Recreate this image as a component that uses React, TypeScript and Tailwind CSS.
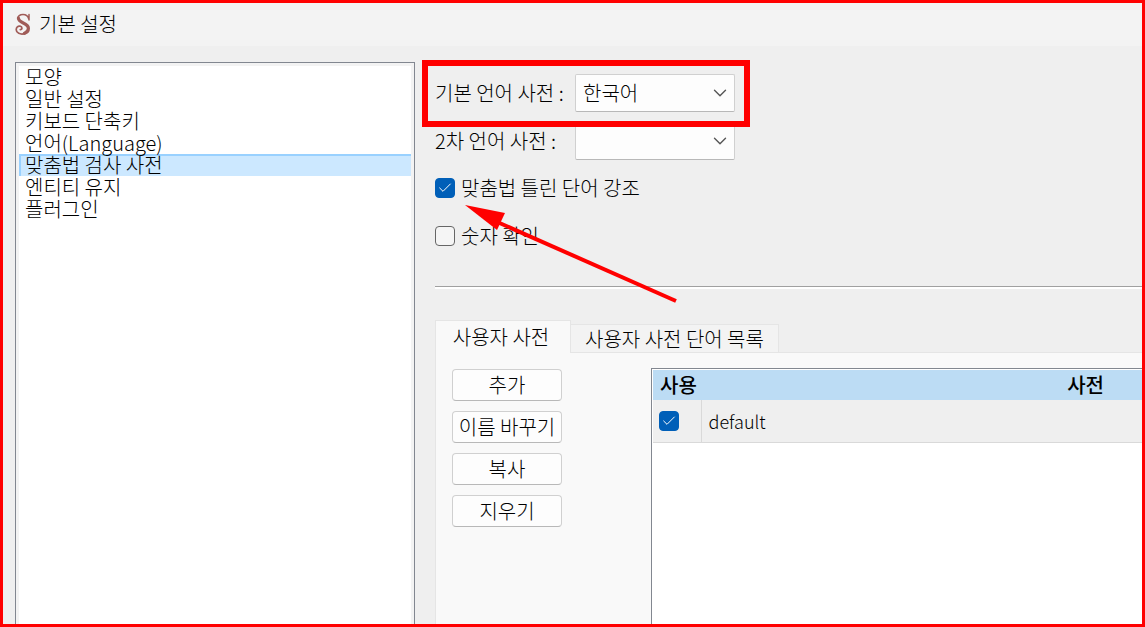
// src/App.tsx
import { Check, ChevronDown } from 'lucide-react';

const menuItems = [
  '모양',
  '일반 설정',
  '키보드 단축키',
  '언어(Language)',
  '맞춤법 검사 사전',
  '엔티티 유지',
  '플러그인',
];

const actions = ['추가', '이름 바꾸기', '복사', '지우기'];

function Logo() {
  return (
    <svg viewBox="0 0 16 22" className="w-4 h-[22px]" fill="none" stroke="#a05c58" strokeLinecap="round">
      <path d="M14 1.5 V7 M13.800 6 C13 3 10.800 1.500 8 1.500 C4.800 1.500 2.800 3.200 2.800 5.600" strokeWidth="1.500" />
      <path d="M3.400 5 C3.200 10.500 13.400 9.500 13.400 15.300 C13.400 18 11.800 19.600 9.500 20.300" strokeWidth="3.200" />
      <path d="M10 20.600 C5 22 1.200 19.800 1.200 16.800 C1.200 14.200 3 12.900 5 13.200 C7.600 13.600 7.400 16.800 5.300 16.600" strokeWidth="1.700" />
    </svg>
  );
}

function Dropdown({ id, label, options }: { id: string; label: string; options: string[] }) {
  return (
    <div className="flex h-[38px] items-center">
      <label htmlFor={id} className="w-[140px] shrink-0">
        {label}
      </label>
      <div className="relative">
        <select
          id={id}
          className="h-[38px] w-40 appearance-none rounded-xs border border-[#d0d0d0] border-b-[#b8b8b8] bg-[#fdfdfd] pl-[7px]"
        >
          {options.map((option) => (
            <option key={option}>{option}</option>
          ))}
        </select>
        <ChevronDown className="pointer-events-none absolute right-1 top-2 size-[22px] text-[#555]" strokeWidth={1.5} />
      </div>
    </div>
  );
}

function Tick({ id, label, checked = false, hideLabel = false }: { id: string; label: string; checked?: boolean; hideLabel?: boolean }) {
  return (
    <div className="flex items-center gap-1.5">
      <span className="relative size-5">
        <input
          id={id}
          type="checkbox"
          defaultChecked={checked}
          aria-label={hideLabel ? label : undefined}
          className="peer block size-5 appearance-none rounded-sm border border-[#666] bg-[#f5f5f5] checked:border-[#005fb8] checked:bg-[#005fb8]"
        />
        <Check
          className="pointer-events-none absolute left-0.5 top-0.5 hidden size-4 text-white peer-checked:block"
          strokeWidth={1.5}
        />
      </span>
      {!hideLabel && <label htmlFor={id}>{label}</label>}
    </div>
  );
}

function DictionaryTable() {
  return (
    <div className="flex-1 border-l border-t border-[#828790] bg-white pl-px pt-px">
      <table className="w-full border-collapse">
        <thead>
          <tr className="h-[30px] bg-[#bcdcf4]">
            <th className="w-12 whitespace-nowrap pl-[7px] text-left font-medium">사용</th>
            <th className="pr-[38px] text-right font-medium">사전</th>
          </tr>
        </thead>
        <tbody>
          <tr className="h-[42px] border-b border-[#d9d9d9] bg-[#efefef]">
            <td className="border-r border-[#d9d9d9] pl-1.5">
              <Tick id="use-default" label="default" checked hideLabel />
            </td>
            <td className="pl-[7px] text-lg">default</td>
          </tr>
        </tbody>
      </table>
    </div>
  );
}

export default function App() {
  return (
    <div className="relative flex min-h-screen flex-col overflow-hidden border-[3px] border-[#ff0000] bg-[#efefef] font-['Noto_Sans_CJK_KR',sans-serif] text-xl leading-[22px] font-light text-black">
      <header className="flex h-[43px] items-center gap-2 bg-[#f3f3f3] pb-0.5 pl-3">
        <Logo />
        <h1>기본 설정</h1>
      </header>

      <main className="flex flex-1 gap-5 pl-3 pt-4">
        <nav className="w-[400px] shrink-0 border border-b-0 border-[#828790] bg-[#f3f3f3] px-[3px] pt-[3px]">
          <ul className="h-full bg-white">
            {menuItems.map((item) => (
              <li key={item}>
                <a
                  href="#"
                  className={
                    item === '맞춤법 검사 사전'
                      ? 'block h-[22px] border-l-2 border-t-2 border-[#99d1ff] bg-[#cce8ff] pl-1 leading-[18px]'
                      : 'block pl-1.5'
                  }
                >
                  {item}
                </a>
              </li>
            ))}
          </ul>
        </nav>

        <section className="flex min-w-0 flex-1 flex-col pt-3">
          <div className="relative flex flex-col gap-2.5">
            <Dropdown id="primary" label="기본 언어 사전 :" options={['한국어']} />
            <Dropdown id="secondary" label="2차 언어 사전 :" options={['']} />
            <div className="flex flex-col gap-3">
              <div className="flex h-9 items-center">
                <Tick id="highlight" label="맞춤법 틀린 단어 강조" checked />
              </div>
              <div className="flex h-9 items-center">
                <Tick id="numbers" label="숫자 확인" />
              </div>
            </div>

            {/* callouts */}
            <div className="pointer-events-none absolute -left-[13px] -top-[14px] h-[67px] w-[328px] border-[6px] border-[#ff0000]" />
            <svg viewBox="0 0 212 98" className="pointer-events-none absolute left-[30px] top-[131px] h-[98px] w-[212px]">
              <line x1="30" y1="16" x2="211" y2="96" stroke="#ff0000" strokeWidth="4" />
              <polygon points="0,0 40,8 32,25" fill="#ff0000" />
            </svg>
          </div>

          <hr className="mt-8 h-[3px] border-t border-[#a0a0a0] bg-white" />

          <div className="mt-[31px] flex flex-1 flex-col">
            <div role="tablist" className="flex items-end">
              <button
                role="tab"
                aria-selected="true"
                className="relative -mb-px h-[33px] w-[136px] shrink-0 border border-b-0 border-[#e5e5e5] bg-[#f9f9f9] pr-1"
              >
                사용자 사전
              </button>
              <button
                role="tab"
                aria-selected="false"
                className="h-7 w-[208px] shrink-0 border border-b-0 border-l-0 border-[#e5e5e5] bg-[#f3f3f3]"
              >
                사용자 사전 단어 목록
              </button>
            </div>
            <div className="flex flex-1 border-l border-t border-[#e5e5e5] bg-[#f9f9f9] pl-4 pt-[15px]">
              <div className="mr-[89px] flex w-[110px] shrink-0 flex-col gap-2.5 pt-px">
                {actions.map((action) => (
                  <button
                    key={action}
                    className="h-8 rounded border border-[#d0d0d0] border-b-[#b8b8b8] bg-[#fdfdfd] whitespace-nowrap"
                  >
                    {action}
                  </button>
                ))}
              </div>
              <DictionaryTable />
            </div>
          </div>
        </section>
      </main>
    </div>
  );
}
